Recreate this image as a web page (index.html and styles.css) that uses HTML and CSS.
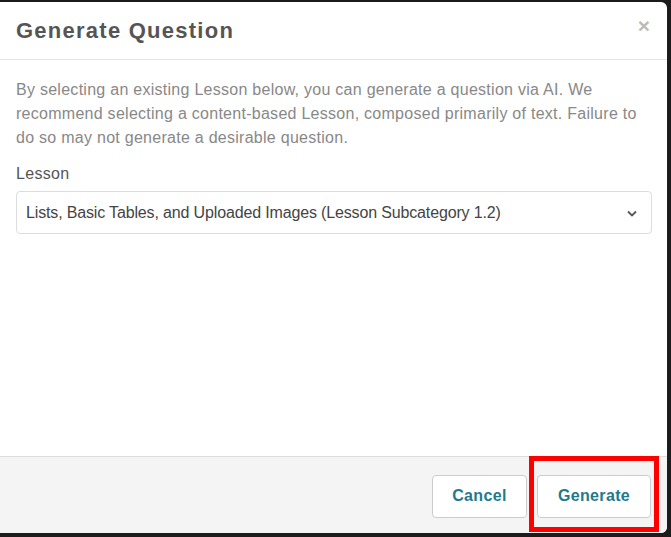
FILE: index.html
```html
<!DOCTYPE html>
<html>
<head>
<meta charset="utf-8">
<link rel="stylesheet" href="styles.css">
</head>
<body>
<div class="modal">
  <div class="modal-header">
    <h2 class="modal-title">Generate Question</h2>
    <span class="close">×</span>
  </div>
  <div class="modal-body">
    <p class="intro">By selecting an existing Lesson below, you can generate a question via AI. We recommend selecting a content-based Lesson, composed primarily of text. Failure to do so may not generate a desirable question.</p>
    <label class="label">Lesson</label>
    <div class="select">
      <span>Lists, Basic Tables, and Uploaded Images (Lesson Subcategory 1.2)</span>
      <svg class="chev" width="10" height="7" viewBox="0 0 10 7"><path d="M1 1.5 L5 5.5 L9 1.5" fill="none" stroke="#555" stroke-width="1.8"/></svg>
    </div>
  </div>
  <div class="modal-footer">
    <button class="btn btn-cancel">Cancel</button>
    <div class="highlight-wrap">
      <button class="btn btn-gen">Generate</button>
      <span class="highlight"></span>
    </div>
  </div>
</div>
</body>
</html>
```
FILE: styles.css
```css
html, body {
  margin: 0;
  padding: 0;
  background: #1c1c1c;
  height: 537px;
  overflow: hidden;
}
body {
  font-family: "Liberation Sans", Arial, sans-serif;
}
.modal {
  margin-top: 2px;
  width: 667px;
  height: 531px;
  background: #fff;
  border-radius: 0 6px 6px 0;
  display: flex;
  flex-direction: column;
  overflow: hidden;
}
.modal-header {
  height: 57px;
  border-bottom: 1px solid #e5e5e5;
  display: flex;
  align-items: center;
  justify-content: space-between;
  padding: 0 16px 0 16px;
}
.modal-title {
  margin: 0;
  font-size: 22px;
  letter-spacing: 1.25px;
  font-weight: bold;
  color: #555;
  padding-top: 1px;
}
.close {
  font-size: 21px;
  color: #bbb;
  font-weight: bold;
  margin-top: -10px;
  margin-right: 1px;
}
.modal-body {
  flex: 1;
  padding: 18px 15px 0 16px;
}
.intro {
  margin: 0;
  font-size: 16px;
  letter-spacing: 0.27px;
  line-height: 24px;
  color: #888;
}
.label {
  display: block;
  margin-top: 15px;
  font-size: 16px;
  letter-spacing: 0.3px;
  color: #555;
}
.select {
  margin-top: 8px;
  height: 41px;
  border: 1px solid #ddd;
  border-radius: 4px;
  display: flex;
  align-items: center;
  justify-content: space-between;
  padding: 0 14px 0 9px;
  font-size: 16px;
  letter-spacing: -0.15px;
  color: #444;
}
.chev { margin-top: 2px; }
.modal-footer {
  height: 74px;
  border-top: 1px solid #ddd;
  background: #f4f4f4;
  display: flex;
  justify-content: flex-end;
  align-items: center;
  gap: 10px;
  padding: 2px 16px 0 0;
}
.btn {
  height: 43px;
  padding: 0;
  background: #fff;
  border: 1px solid #ccc;
  border-radius: 4px;
  font-family: "Liberation Sans", Arial, sans-serif;
  font-size: 16px;
  letter-spacing: 0.35px;
  font-weight: bold;
  color: #1f7a8c;
}
.btn-cancel { width: 95px; }
.btn-gen { width: 114px; }
.highlight-wrap { position: relative; display: flex; }
.highlight {
  position: absolute;
  left: -8px;
  top: -19px;
  width: 120px;
  height: 66px;
  border: 5px solid #ff0000;
}
```
